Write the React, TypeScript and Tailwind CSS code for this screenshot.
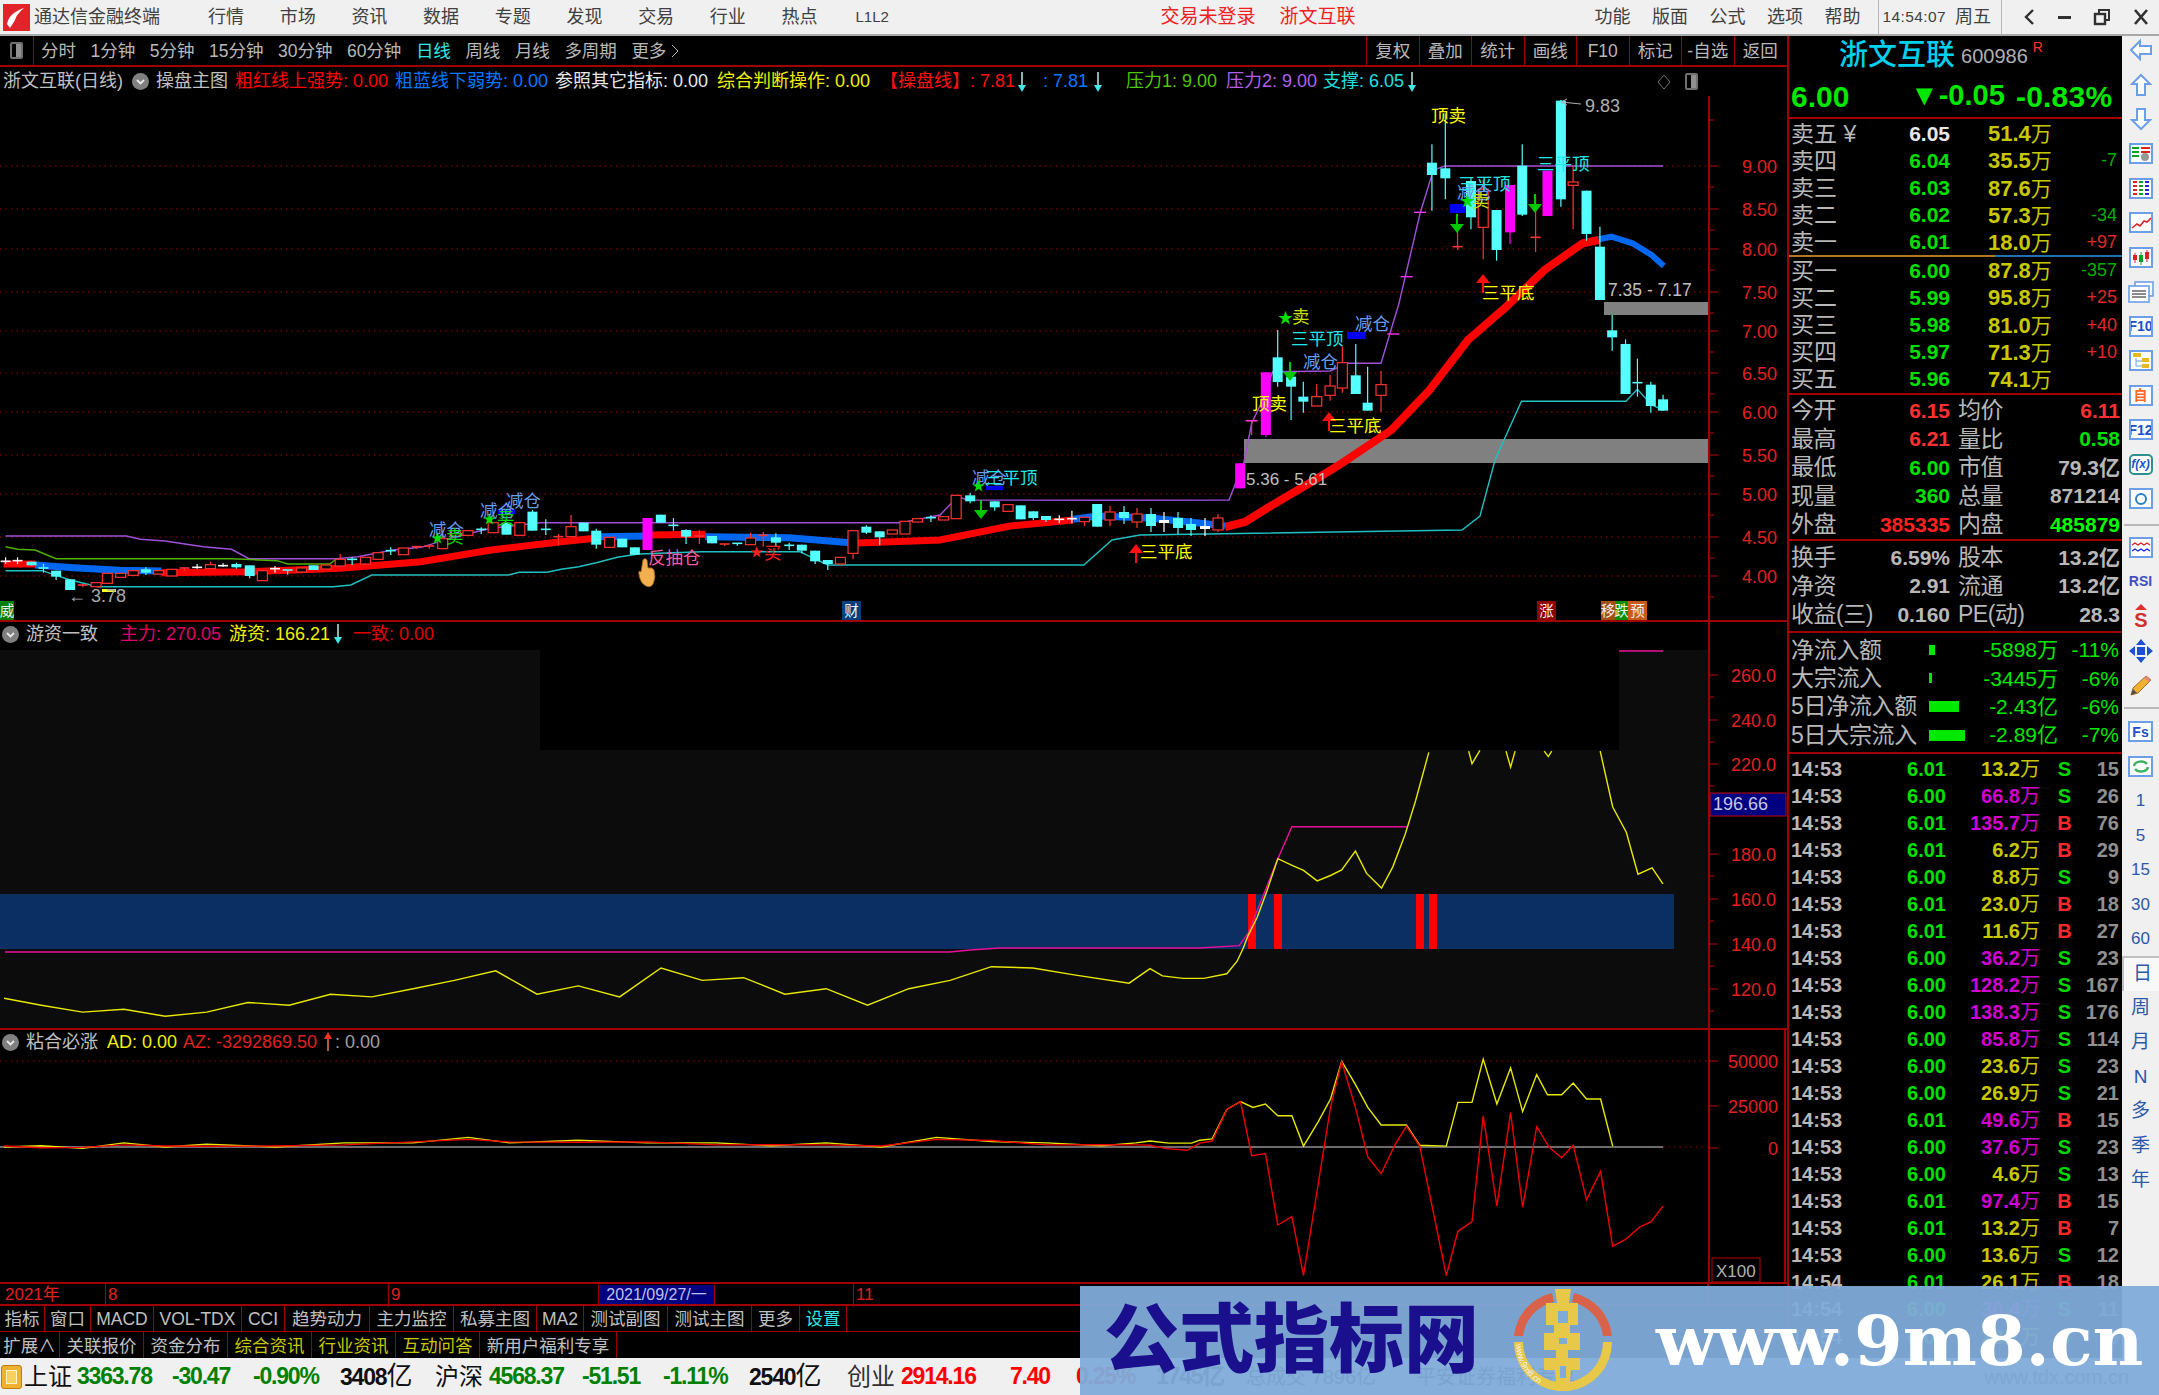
import React from 'react';

type Pt = [number, number];
type Candle = [number, number, number, number, number, string];

// reference crops came at different scales, these map them back to page pixels
const z5 = ([x, y]: Pt): Pt => [1200 + x / 2.613, 80 + y / 3];
const z6 = ([x, y]: Pt): Pt => [x / 1.4255, 440 + y / 3];
const z9 = ([x, y]: Pt): Pt => [1150 + x / 2.41, 620 + y / 2.38];
const ov = ([x, y]: Pt): Pt => [x * 1.377, y * 1.377];
const poly = (pts: Pt[]) => pts.map((p) => `${p[0].toFixed(1)},${p[1].toFixed(1)}`).join(' ');

const leftCandles: Candle[] = [
  [8, 352, 364, 366, 372, 'w'], [25, 352, 362, 364, 372, 'w'], [45, 365, 365, 376, 376, 'c'], [62, 372, 384, 386, 398, 'c'],
  [80, 392, 392, 410, 420, 'c'], [100, 418, 418, 450, 450, 'c'], [118, 432, 435, 442, 442, 'r'], [137, 428, 428, 440, 440, 'r'],
  [153, 400, 400, 430, 430, 'r'], [172, 400, 400, 412, 412, 'r'], [190, 392, 392, 406, 406, 'r'], [208, 382, 388, 398, 405, 'c'],
  [226, 392, 392, 402, 402, 'r'], [245, 388, 388, 408, 408, 'r'], [263, 384, 384, 392, 392, 'r'], [281, 372, 382, 386, 386, 'w'],
  [300, 365, 374, 386, 386, 'r'], [318, 370, 377, 380, 381, 'w'], [337, 368, 372, 382, 386, 'c'], [356, 376, 376, 408, 415, 'c'],
  [374, 392, 392, 422, 422, 'r'], [392, 378, 386, 389, 398, 'w'], [410, 390, 390, 395, 404, 'c'], [430, 384, 384, 396, 396, 'r'],
  [447, 376, 376, 390, 390, 'c'], [465, 375, 375, 387, 387, 'r'], [485, 342, 358, 378, 378, 'r'], [502, 352, 358, 363, 375, 'c'],
  [521, 352, 352, 372, 372, 'r'], [539, 338, 338, 358, 358, 'r'], [557, 322, 332, 338, 345, 'c'], [575, 324, 324, 344, 344, 'r'],
  [594, 320, 320, 326, 326, 'r'], [612, 318, 318, 326, 326, 'r'], [631, 280, 296, 326, 326, 'r'], [649, 272, 272, 288, 288, 'r'],
  [667, 272, 272, 286, 286, 'r'], [686, 262, 268, 276, 282, 'c'], [703, 248, 248, 278, 278, 'r'], [722, 248, 248, 284, 284, 'c'],
  [741, 248, 248, 286, 286, 'r'], [759, 210, 215, 272, 272, 'c'], [778, 238, 268, 272, 285, 'c'], [796, 282, 290, 296, 316, 'r'],
  [814, 225, 260, 290, 290, 'r'], [832, 248, 248, 274, 274, 'c'], [850, 266, 272, 314, 326, 'c'], [869, 292, 292, 322, 322, 'r'],
  [887, 296, 296, 322, 322, 'c'], [905, 322, 322, 344, 344, 'c'], [923, 234, 234, 330, 330, 'm'], [942, 224, 224, 248, 248, 'c'],
  [960, 234, 256, 260, 272, 'c'], [978, 268, 270, 290, 312, 'c'], [997, 270, 288, 294, 312, 'r'], [1015, 288, 288, 310, 310, 'c'],
  [1033, 312, 312, 318, 318, 'r'], [1051, 310, 310, 317, 317, 'c'], [1070, 278, 294, 314, 314, 'r'], [1088, 276, 286, 292, 320, 'r'],
  [1106, 280, 292, 308, 320, 'c'], [1125, 308, 316, 320, 330, 'c'], [1143, 314, 314, 332, 340, 'c'], [1162, 332, 332, 364, 372, 'c'],
  [1180, 360, 360, 372, 390, 'c'], [1198, 352, 352, 372, 372, 'r'], [1216, 272, 272, 340, 358, 'r'], [1235, 256, 260, 278, 282, 'c'],
  [1254, 274, 274, 292, 316, 'c'], [1272, 270, 270, 282, 282, 'r'], [1290, 244, 244, 282, 282, 'r'], [1308, 236, 236, 246, 246, 'r'],
  [1327, 226, 233, 238, 246, 'c'], [1345, 230, 230, 240, 240, 'r'], [1363, 166, 166, 236, 236, 'r'], [1383, 158, 166, 184, 190, 'c'],
  [1418, 184, 184, 202, 212, 'c'], [1437, 194, 194, 214, 214, 'r'], [1455, 196, 196, 238, 238, 'c'], [1473, 214, 214, 234, 240, 'c'],
  [1491, 228, 228, 240, 246, 'c'], [1510, 226, 238, 240, 250, 'w'], [1528, 212, 236, 242, 250, 'w'], [1546, 232, 232, 245, 258, 'r'],
  [1564, 192, 192, 260, 260, 'c'],
];

const midCandles: Candle[] = [
  [1110, 506, 512, 520, 526, 'r'], [1124, 506, 512, 518, 524, 'c'], [1137, 508, 514, 522, 528, 'r'], [1151, 508, 514, 526, 532, 'c'],
  [1164, 512, 520, 523, 532, 'w'], [1178, 512, 518, 528, 534, 'c'], [1191, 518, 524, 530, 536, 'c'], [1205, 518, 526, 529, 536, 'w'],
  [1218, 514, 518, 530, 532, 'r'],
];

const rightCandles: Candle[] = [
  [105, 1150, 1150, 1225, 1225, 'm'], [135, 1020, 1022, 1024, 1065, 'r'], [172, 877, 877, 1065, 1072, 'm'], [203, 750, 832, 906, 920, 'c'],
  [238, 880, 890, 920, 1020, 'c'], [270, 905, 950, 965, 998, 'c'], [305, 912, 950, 978, 978, 'r'], [340, 885, 918, 946, 962, 'r'],
  [372, 800, 848, 924, 938, 'r'], [407, 792, 886, 942, 942, 'c'], [438, 860, 968, 992, 992, 'c'], [473, 872, 914, 946, 996, 'r'],
  [606, 193, 248, 285, 392, 'c'], [641, 100, 265, 295, 358, 'c'], [673, 430, 500, 506, 510, 'r'], [708, 295, 303, 412, 448, 'c'],
  [740, 300, 328, 442, 538, 'r'], [775, 390, 390, 510, 542, 'c'], [810, 315, 315, 457, 492, 'm'], [842, 193, 257, 404, 408, 'c'],
  [877, 345, 472, 478, 516, 'r'], [908, 272, 272, 408, 408, 'm'], [943, 60, 62, 358, 380, 'c'], [975, 258, 306, 316, 448, 'r'],
  [1010, 332, 332, 462, 482, 'c'], [1045, 440, 500, 660, 660, 'c'], [1077, 705, 751, 772, 812, 'c'], [1112, 778, 792, 942, 942, 'c'],
  [1143, 836, 908, 912, 950, 'c'], [1178, 905, 914, 978, 998, 'c'], [1210, 944, 958, 992, 992, 'c'],
];

function CandleMark({ x, hi, top, bot, lo, kind }: { x: number; hi: number; top: number; bot: number; lo: number; kind: string }) {
  const color = kind === 'c' ? '#54ffff' : kind === 'r' ? '#ff3232' : kind === 'm' ? '#ff00ff' : '#ffffff';
  const flat = bot - top < 3;
  return (
    <g>
      <line x1={x} x2={x} y1={hi} y2={lo} stroke={color} strokeWidth={1.2} />
      {flat ? (
        <line x1={x - 5} x2={x + 5} y1={top} y2={top} stroke={color} strokeWidth={1.6} />
      ) : (
        <rect x={x - 5} y={top} width={10} height={bot - top} fill={kind === 'r' ? '#000' : color} stroke={color} strokeWidth={kind === 'r' ? 1.2 : 0} />
      )}
    </g>
  );
}

function DownArrow({ x, y, h = 18, color = '#00c800' }: { x: number; y: number; h?: number; color?: string }) {
  return (
    <g>
      <line x1={x} x2={x} y1={y} y2={y + h - 6} stroke={color} strokeWidth={2} />
      <polygon points={`${x - 7},${y + h - 8} ${x + 7},${y + h - 8} ${x},${y + h + 1}`} fill={color} />
    </g>
  );
}

function UpArrow({ x, y, h = 18, color = '#ff1010' }: { x: number; y: number; h?: number; color?: string }) {
  return (
    <g>
      <polygon points={`${x - 7},${y + 8} ${x + 7},${y + 8} ${x},${y - 1}`} fill={color} />
      <line x1={x} x2={x} y1={y + 6} y2={y + h} stroke={color} strokeWidth={2} />
    </g>
  );
}

const mainLabels: [string, number, number, string][] = [
  ['顶卖', 1431, 122, '#ffff00'], ['三平顶', 1537, 170, '#20e8e8'], ['三平顶', 1458, 190, '#20e8e8'], ['减仓', 1457, 199, '#6a9cf0'],
  ['卖', 1472, 207, '#c8e000'], ['三平底', 1482, 299, '#ffff00'], ['卖', 1292, 323, '#c8e000'], ['三平顶', 1291, 345, '#20e8e8'],
  ['减仓', 1355, 330, '#6a9cf0'], ['减仓', 1303, 368, '#6a9cf0'], ['顶卖', 1252, 410, '#ffff00'], ['三平底', 1329, 432, '#ffff00'],
  ['减仓', 429, 536, '#6a9cf0'], ['卖', 446, 543, '#00d800'], ['减仓', 480, 517, '#6a9cf0'], ['卖', 497, 524, '#00d800'], ['减仓', 506, 507, '#6a9cf0'],
  ['反抽仓', 648, 564, '#ff5aa8'], ['买', 764, 559, '#ff2020'], ['减仓', 972, 484, '#6a9cf0'], ['三平顶', 985, 484, '#20e8e8'], ['三平底', 1140, 558, '#ffff00'],
];

const priceAxis: [string, number][] = [
  ['9.00', 166], ['8.50', 209], ['8.00', 249], ['7.50', 292], ['7.00', 331], ['6.50', 373], ['6.00', 412], ['5.50', 455], ['5.00', 494], ['4.50', 537], ['4.00', 576],
];

function MainChart() {
  const purple: Pt[] = [
    ...[[8, 288], [180, 288], [200, 298], [235, 303], [290, 320], [330, 328], [355, 356], [480, 356], [510, 350], [560, 330], [600, 322], [650, 290], [700, 265], [770, 248], [1285, 248], [1340, 225], [1365, 170], [1380, 180], [1568, 181]].map((p) => z6(p as Pt)),
    [1229, 500],
    ...[[115, 1145], [135, 1030], [160, 970], [190, 875], [340, 873], [385, 850], [473, 850], [520, 670], [575, 400], [610, 270], [640, 258], [1210, 258]].map((p) => z5(p as Pt)),
  ];
  const green = [[8, 320], [25, 328], [50, 330], [80, 356], [330, 356], [395, 362], [410, 372], [470, 372], [480, 356]].map((p) => z6(p as Pt));
  const teal: Pt[] = [
    ...[[8, 392], [60, 392], [100, 420], [140, 440], [475, 440], [500, 435], [530, 405], [725, 405], [740, 397], [780, 397], [800, 388], [825, 380], [850, 368], [880, 352], [910, 342], [1000, 335], [1140, 335], [1180, 375], [1545, 375]].map((p) => z6(p as Pt)),
    [1112, 540], [1140, 535], [1462, 530], [1480, 516], [1495, 460],
    ...[[840, 964], [1113, 964], [1143, 928], [1180, 975], [1210, 990]].map((p) => z5(p as Pt)),
  ];
  const redA = [[5, 372], [50, 372]].map((p) => z6(p as Pt));
  const blueA = [[50, 375], [110, 384], [170, 391], [230, 393]].map((p) => z6(p as Pt));
  const redB = [[230, 398], [350, 395], [485, 385], [600, 365], [700, 330], [800, 305], [855, 293]].map((p) => z6(p as Pt));
  const blueB = [[855, 290], [925, 288]].map((p) => z6(p as Pt));
  const redC = [[925, 285], [1005, 283]].map((p) => z6(p as Pt));
  const blueC = [[1005, 290], [1125, 293], [1212, 308]].map((p) => z6(p as Pt));
  const redD = [[1212, 310], [1340, 300], [1440, 258], [1530, 240]].map((p) => z6(p as Pt));
  const blueD: Pt[] = [z6([1530, 238]), [1097, 516], [1150, 518], [1190, 522], [1225, 526]];
  const redE: Pt[] = [
    [1225, 527], [1245, 522], [1269, 507],
    ...[[300, 1200], [370, 1150], [500, 1050], [600, 930], [700, 780], [800, 680], [900, 570], [1000, 490], [1042, 480]].map((p) => z5(p as Pt)),
  ];
  const blueE = [[1042, 478], [1075, 470], [1130, 490], [1180, 525], [1212, 558]].map((p) => z5(p as Pt));

  return (
    <svg viewBox="0 67 1787 553" className="absolute inset-0 w-full h-full text-[17.5px]">
      {priceAxis.map(([label, y]) => (
        <g key={label}>
          <line x1={0} x2={1709} y1={y} y2={y} stroke="#a00000" strokeWidth={1} strokeDasharray="1.5 4" />
          <line x1={1709} x2={1718} y1={y} y2={y} stroke="#c00000" />
          <line x1={1709} x2={1714} y1={y + 21} y2={y + 21} stroke="#c00000" />
          <text x={1777} y={y + 7} textAnchor="end" fill="#e02020" fontSize={18}>{label}</text>
        </g>
      ))}
      <rect x={1244} y={439} width={465} height={24} fill="#808080" />
      <rect x={1604} y={302} width={105} height={13} fill="#808080" />
      <polyline points={poly(purple)} fill="none" stroke="#a050d8" strokeWidth={1.4} />
      <polyline points={poly(green)} fill="none" stroke="#50b000" strokeWidth={1.4} />
      <polyline points={poly(teal)} fill="none" stroke="#20c0c0" strokeWidth={1.4} />
      {[redA, redB, redC, redD, redE].map((line, i) => (
        <polyline key={i} points={poly(line)} fill="none" stroke="#ff0000" strokeWidth={i === 4 ? 8 : 7} />
      ))}
      {[blueA, blueB, blueC, blueD, blueE].map((line, i) => (
        <polyline key={i} points={poly(line)} fill="none" stroke="#0068f0" strokeWidth={i === 4 ? 6 : 7} />
      ))}
      {leftCandles.map((c) => {
        const [x] = z6([c[0], 0]);
        return <CandleMark key={`l${c[0]}`} x={x} hi={440 + c[1] / 3} top={440 + c[2] / 3} bot={440 + c[3] / 3} lo={440 + c[4] / 3} kind={c[5]} />;
      })}
      {midCandles.map((c) => <CandleMark key={`m${c[0]}`} x={c[0]} hi={c[1]} top={c[2]} bot={c[3]} lo={c[4]} kind={c[5]} />)}
      {rightCandles.map((c) => {
        const [x] = z5([c[0], 0]);
        return <CandleMark key={`r${c[0]}`} x={x} hi={80 + c[1] / 3} top={80 + c[2] / 3} bot={80 + c[3] / 3} lo={80 + c[4] / 3} kind={c[5]} />;
      })}
      {[[135, 1022], [505, 762], [540, 590], [575, 397]].map(([x, y]) => {
        const [px, py] = z5([x, y]);
        return <line key={x} x1={px - 6} x2={px + 6} y1={py} y2={py} stroke="#ff30ff" strokeWidth={1.4} />;
      })}
      <rect x={1450} y={204} width={16} height={9} fill="#0000f0" />
      <rect x={1347} y={332} width={18} height={7} fill="#0000f0" />
      <rect x={498} y={509} width={17} height={5} fill="#0000f0" />
      <rect x={986} y={486} width={17} height={4} fill="#0000f0" />
      <rect x={102} y={589} width={14} height={3} fill="#ffff20" />
      <DownArrow x={1457} y={214} />
      <DownArrow x={1535} y={194} />
      <DownArrow x={1290} y={362} />
      <DownArrow x={981} y={500} />
      <UpArrow x={1483} y={275} />
      <UpArrow x={1329} y={413} />
      <UpArrow x={1136} y={545} />
      {mainLabels.map(([t, x, y, color], i) => (
        <text key={i} x={x} y={y} fill={color} fontSize={17.5}>{t}</text>
      ))}
      <text x={1460} y={206} fill="#00e000" fontSize={15}>★</text>
      <text x={1278} y={323} fill="#00e000" fontSize={15}>★</text>
      <text x={431} y={542} fill="#00e000" fontSize={13}>★</text>
      <text x={483} y={523} fill="#00e000" fontSize={13}>★</text>
      <text x={972} y={490} fill="#00e000" fontSize={13}>★</text>
      <text x={750} y={556} fill="#ff2020" fontSize={13}>★</text>
      <text x={1585} y={112} fill="#b0b0b0" fontSize={18}>9.83</text>
      <path d="M1561 102 L1567 99 M1561 102 L1567 105 M1561 102 L1581 104" stroke="#b0b0b0" fill="none" />
      <text x={1608} y={296} fill="#c0c0c0" fontSize={17.5}>7.35 - 7.17</text>
      <text x={1246} y={485} fill="#c0c0c0" fontSize={17}>5.36 - 5.61</text>
      <text x={68} y={602} fill="#a8a8a8" fontSize={18}>← 3.78</text>
      {/* hand cursor */}
      <path d="M643 560 q2 -3 4 0 l1 8 q4 -1 6 2 q2 8 -1 14 q-2 4 -7 2 q-6 -3 -7 -12 q-1 -4 2 -2 z" fill="#f2b050" stroke="#a86a20" strokeWidth={0.8} />
      <line x1={1709} x2={1709} y1={96} y2={622} stroke="#a00000" strokeWidth={2} />
      <line x1={1709} x2={1714} y1={120} y2={120} stroke="#c00000" />
    </svg>
  );
}

function Tag({ x, w, bg, t }: { x: number; w: number; bg: string; t: string }) {
  return (
    <g>
      <rect x={x} y={601} width={w} height={19} fill={bg} />
      <text x={x + w / 2} y={616} textAnchor="middle" fill="#f0f0f0" fontSize={14.5}>{t}</text>
    </g>
  );
}

const sub1Axis: [string, number][] = [['260.0', 675], ['240.0', 720], ['220.0', 764], ['180.0', 854], ['160.0', 899], ['140.0', 944], ['120.0', 989]];

function FundChart() {
  const yellowLeft = [[3, 725], [30, 730], [60, 735], [90, 733], [120, 738], [150, 735], [180, 728], [210, 730], [240, 722], [270, 724], [300, 718], [330, 712], [360, 705], [390, 722], [420, 716], [450, 724], [480, 703], [510, 712], [540, 710], [570, 722], [600, 718], [630, 730], [660, 718], [690, 712], [720, 702], [750, 703], [780, 708], [820, 714]].map((p) => ov(p as Pt));
  const yellowA = [[0, 830], [30, 847], [80, 853], [130, 853], [185, 842], [210, 812], [225, 780], [237, 750], [258, 708], [280, 650], [308, 568], [345, 585], [370, 596], [403, 621], [435, 608], [462, 595], [495, 550], [522, 603], [558, 638], [585, 588], [615, 510], [640, 430], [672, 315]].map((p) => z9(p as Pt));
  const yellowB = [[768, 312], [776, 342], [795, 310]].map((p) => z9(p as Pt));
  const yellowC = [[858, 312], [869, 350], [880, 312]].map((p) => z9(p as Pt));
  const yellowD = [[950, 312], [960, 325], [968, 312]].map((p) => z9(p as Pt));
  const yellowE = [[1085, 312], [1115, 445], [1148, 505], [1176, 605], [1210, 590], [1236, 628]].map((p) => z9(p as Pt));
  const magenta: Pt[] = [
    [5, 952], [950, 952], [970, 950], [1000, 948], [1150, 948], [1200, 948],
    ...[[215, 775], [237, 745], [308, 568], [342, 492], [620, 492]].map((p) => z9(p as Pt)),
  ];
  return (
    <svg viewBox="0 622 1787 406" className="absolute inset-0 w-full h-full">
      <rect x={0} y={650} width={1709} height={380} fill="#0c0c0c" />
      <rect x={540} y={650} width={1079} height={100} fill="#000" />
      <rect x={0} y={894} width={1674} height={55} fill="#0b2f63" />
      {[[1248, 8], [1274, 8], [1416, 8], [1429, 8]].map(([x, w]) => (
        <rect key={x} x={x} y={894} width={w} height={55} fill="#ff0000" />
      ))}
      <polyline points={poly(magenta)} fill="none" stroke="#e8109a" strokeWidth={1.4} />
      <line x1={1619} x2={1663} y1={651} y2={651} stroke="#e8109a" strokeWidth={1.4} />
      <polyline points={poly([...yellowLeft, ...yellowA])} fill="none" stroke="#e8e800" strokeWidth={1.4} />
      {[yellowB, yellowC, yellowD, yellowE].map((line, i) => (
        <polyline key={i} points={poly(line)} fill="none" stroke="#e8e800" strokeWidth={1.4} />
      ))}
      <line x1={1709} x2={1709} y1={622} y2={1030} stroke="#a00000" strokeWidth={2} />
      {sub1Axis.map(([label, y]) => (
        <g key={label}>
          <line x1={1709} x2={1718} y1={y} y2={y} stroke="#c00000" />
          <line x1={1709} x2={1714} y1={y + 22} y2={y + 22} stroke="#c00000" />
          <text x={1776} y={y + 7} textAnchor="end" fill="#e02020" fontSize={18}>{label}</text>
        </g>
      ))}
      <rect x={1710} y={793} width={76} height={23} fill="#000080" stroke="#c00000" />
      <text x={1713} y={810} fill="#c8c8e8" fontSize={18}>196.66</text>
    </svg>
  );
}

function StickChart() {
  const flat = [[3, 833], [30, 832], [60, 834], [90, 830], [120, 833], [150, 831], [200, 833], [250, 830], [300, 830], [340, 826], [370, 830], [420, 828], [470, 830], [520, 830], [560, 832], [600, 830], [640, 833], [680, 826], [720, 829], [760, 830], [800, 832], [825, 830]].map((p) => ov(p as Pt));
  const yellow = [[0, 1240], [45, 1245], [100, 1245], [120, 1238], [150, 1235], [185, 1165], [218, 1146], [248, 1160], [278, 1152], [308, 1180], [342, 1180], [370, 1252], [405, 1195], [435, 1140], [462, 1050], [495, 1105], [525, 1160], [557, 1202], [618, 1202], [650, 1250], [714, 1252], [742, 1148], [776, 1148], [803, 1045], [836, 1152], [869, 1066], [898, 1170], [932, 1082], [958, 1130], [992, 1130], [1020, 1102], [1052, 1140], [1086, 1140], [1115, 1252]].map((p) => z9(p as Pt));
  const red = [[0, 1250], [40, 1258], [90, 1262], [120, 1245], [150, 1240], [185, 1165], [218, 1146], [245, 1275], [278, 1270], [308, 1440], [342, 1420], [370, 1560], [405, 1345], [435, 1160], [462, 1052], [495, 1160], [525, 1278], [557, 1318], [590, 1250], [618, 1205], [650, 1252], [714, 1560], [742, 1455], [776, 1432], [803, 1180], [836, 1395], [869, 1172], [898, 1398], [932, 1206], [962, 1255], [992, 1280], [1020, 1250], [1052, 1380], [1086, 1312], [1115, 1490], [1145, 1475], [1180, 1445], [1208, 1432], [1236, 1395]].map((p) => z9(p as Pt));
  const flatRed = flat.map((p, i): Pt => [p[0], p[1] + (i % 2 ? 2 : -1)]);
  return (
    <svg viewBox="0 1030 1787 252" className="absolute inset-0 w-full h-full">
      <line x1={0} x2={1709} y1={1061} y2={1061} stroke="#a00000" strokeDasharray="1.5 4" />
      <line x1={1663} x2={1709} y1={1147} y2={1147} stroke="#a00000" strokeDasharray="1.5 4" />
      <line x1={0} x2={1663} y1={1147} y2={1147} stroke="#909090" strokeWidth={1.4} />
      <polyline points={poly([...flat, ...yellow])} fill="none" stroke="#e8e800" strokeWidth={1.4} />
      <polyline points={poly([...flatRed, ...red])} fill="none" stroke="#f00000" strokeWidth={1.4} />
      <line x1={1709} x2={1709} y1={1030} y2={1282} stroke="#a00000" strokeWidth={2} />
      <line x1={1785} x2={1785} y1={1030} y2={1282} stroke="#a00000" strokeWidth={2} />
      {[['50000', 1061], ['25000', 1106], ['0', 1148]].map(([label, y]) => (
        <g key={label}>
          <line x1={1709} x2={1718} y1={y} y2={y} stroke="#c00000" />
          <text x={1778} y={Number(y) + 7} textAnchor="end" fill="#e02020" fontSize={18}>{label}</text>
        </g>
      ))}
      <rect x={1712} y={1258} width={48} height={24} fill="#000" stroke="#c00000" />
      <text x={1716} y={1277} fill="#b0b0b0" fontSize={17}>X100</text>
    </svg>
  );
}

function Dropdown() {
  return (
    <span className="inline-flex items-center justify-center w-[17px] h-[17px] rounded-full bg-[#808080]">
      <svg width="11" height="11" viewBox="0 0 11 11"><path d="M2 4l3.5 3.5L9 4" stroke="#e8e8e8" strokeWidth="1.8" fill="none" /></svg>
    </span>
  );
}

function CyanArrow() {
  return (
    <svg width="10" height="24" viewBox="0 0 10 24" className="shrink-0">
      <line x1="5" x2="5" y1="2" y2="18" stroke="#c8ffff" strokeWidth="1.4" />
      <polygon points="1,15 9,15 5,22" fill="#40e8e8" />
    </svg>
  );
}

function RedUpArrow() {
  return (
    <svg width="10" height="24" viewBox="0 0 10 24" className="shrink-0">
      <line x1="5" x2="5" y1="6" y2="21" stroke="#ff8060" strokeWidth="1.4" />
      <polygon points="1,9 9,9 5,2" fill="#ff3020" />
    </svg>
  );
}

function TitleBar() {
  const menus = ['行情', '市场', '资讯', '数据', '专题', '发现', '交易', '行业', '热点'];
  return (
    <div className="h-[36px] shrink-0 bg-[#f0f0f0] border-b-2 border-[#a8a8a8] flex items-center text-[#404040] text-[18px] whitespace-nowrap">
      <svg width="27" height="27" viewBox="0 0 27 27" className="ml-[3px] shrink-0">
        <rect width="27" height="27" fill="#e0242a" />
        <path d="M4 20 Q6 9 21 4 Q13 11 12 16 Q11 18 7 24 Z" fill="#fff" />
      </svg>
      <span className="ml-[4px] w-[174px] shrink-0">通达信金融终端</span>
      <div className="flex gap-[35.7px] shrink-0">
        {menus.map((m) => <span key={m}>{m}</span>)}
      </div>
      <span className="ml-[38px] text-[15px] w-[305px] shrink-0">L1L2</span>
      <span className="text-[#f02020] text-[19px] w-[119px] shrink-0">交易未登录</span>
      <span className="text-[#f02020] text-[19px] w-[315px] shrink-0">浙文互联</span>
      <div className="flex gap-[21.5px] shrink-0">
        {['功能', '版面', '公式', '选项', '帮助'].map((m) => <span key={m}>{m}</span>)}
      </div>
      <div className="ml-[17px] h-full border-x border-[#b8b8b8] flex items-center gap-[9px] px-[4px] w-[124px] shrink-0">
        <span className="text-[15.5px] tracking-[0.4px]">14:54:07</span>
        <span>周五</span>
      </div>
      <svg width="157" height="24" viewBox="0 0 157 24" className="shrink-0" stroke="#303030" fill="none">
        <path d="M31 5l-7 7 7 7" strokeWidth="2.4" />
        <path d="M56 12.5h13" strokeWidth="3" />
        <rect x="93" y="9" width="10" height="10" strokeWidth="2.4" />
        <path d="M97 9V5h10v10h-4" strokeWidth="2" />
        <path d="M133 5l12 14M145 5l-12 14" strokeWidth="2.6" />
      </svg>
    </div>
  );
}

function PeriodBar() {
  const periods = ['分时', '1分钟', '5分钟', '15分钟', '30分钟', '60分钟', '日线', '周线', '月线', '多周期'];
  const tools = ['复权', '叠加', '统计', '画线', 'F10', '标记', '-自选', '返回'];
  return (
    <div className="h-[31px] shrink-0 flex items-stretch border-b-2 border-[#a00000] text-[#b8b8b8] text-[17.5px]">
      <div className="w-[34px] shrink-0 border-r border-[#a00000] flex items-center justify-center">
        <span className="w-[13px] h-[17px] rounded-[2px] border-2 border-[#707070] flex justify-end"><span className="w-[5px] bg-[#909090]" /></span>
      </div>
      <div className="flex items-center gap-[14.5px] pl-[7px] pt-[1px]">
        {periods.map((p) => (
          <span key={p} className={p === '日线' ? 'text-[#30e8e8]' : ''}>{p}</span>
        ))}
        <span className="flex items-center gap-[5px]">
          更多
          <svg width="8" height="16" viewBox="0 0 8 16"><path d="M1 2l6 6-6 6" stroke="#b8b8b8" fill="none" /></svg>
        </span>
      </div>
      <div className="ml-auto flex pr-[1px]">
        {tools.map((t) => (
          <span key={t} className="w-[52.5px] border-l border-[#a00000] flex items-center justify-center pt-[1px]">{t}</span>
        ))}
      </div>
    </div>
  );
}

function Legend() {
  return (
    <div className="relative h-[29px] flex items-center text-[18px] whitespace-nowrap pl-[3px]">
      <span className="text-[#c0c0c0] w-[129px]">浙文互联(日线)</span>
      <Dropdown />
      <span className="text-[#c0c0c0] ml-[7px] w-[79px]">操盘主图</span>
      <span className="text-[#ff0000] w-[160px]">粗红线上强势: 0.00</span>
      <span className="text-[#0078ff] w-[160px]">粗蓝线下弱势: 0.00</span>
      <span className="text-[#e8e8e8] w-[162px]">参照其它指标: 0.00</span>
      <span className="text-[#f0f000] w-[163px]">综合判断操作: 0.00</span>
      <span className="text-[#ff1010] w-[137px]">【操盘线】: 7.81</span>
      <CyanArrow />
      <span className="text-[#0078ff] ml-[16px] w-[50px]">: 7.81</span>
      <CyanArrow />
      <span className="text-[#50c800] ml-[23px] w-[100px]">压力1: 9.00</span>
      <span className="text-[#b060f0] w-[97px]">压力2: 9.00</span>
      <span className="text-[#20e0e0] w-[84px]">支撑: 6.05</span>
      <CyanArrow />
      <svg width="14" height="18" viewBox="0 0 14 18" className="ml-[240px]"><path d="M7 2l6 7-6 7-6-7z" stroke="#707070" fill="none" /></svg>
      <span className="ml-[14px] w-[13px] h-[17px] rounded-[2px] border-2 border-[#707070] flex justify-end"><span className="w-[5px] bg-[#909090]" /></span>
    </div>
  );
}

function Pane({ h, children }: { h: string; children: React.ReactNode }) {
  return <div className={`relative shrink-0 ${h}`}>{children}</div>;
}

function DateAxis() {
  return (
    <div className="relative h-[24px] shrink-0 border-y-2 border-[#a00000] flex items-center text-[#e02020] text-[17px] whitespace-nowrap pt-[1px]">
      <span className="pl-[5px] w-[106px] border-r border-[#a00000]">2021年</span>
      <span className="pl-[2px] w-[283px] border-r border-[#a00000]">8</span>
      <span className="pl-[2px] w-[209px]">9</span>
      <span className="w-[117px] self-stretch bg-[#000080] text-[#c0c0f0] text-[16px] flex items-center justify-center border-x border-[#a00000]">2021/09/27/一</span>
      <span className="ml-[138px] pl-[2px] border-l border-[#a00000]">11</span>
      <div className="absolute right-[78px] top-0 bottom-0 border-r-2 border-[#a00000]" />
    </div>
  );
}

function Tab({ t, w, color = 'text-[#c0c0c0]' }: { t: string; w: string; color?: string }) {
  return <span className={`${w} ${color} shrink-0 border-r border-[#a00000] flex items-center justify-center pt-[2px]`}>{t}</span>;
}

function TabBars() {
  return (
    <>
      <div className="h-[26px] shrink-0 flex border-b border-[#a00000] text-[17.5px] whitespace-nowrap">
        <Tab t="指标" w="w-[45px]" />
        <Tab t="窗口" w="w-[46px]" />
        <Tab t="MACD" w="w-[63px]" />
        <Tab t="VOL-TDX" w="w-[88px]" />
        <Tab t="CCI" w="w-[43px]" />
        <Tab t="趋势动力" w="w-[85px]" />
        <Tab t="主力监控" w="w-[84px]" />
        <Tab t="私募主图" w="w-[83px]" />
        <Tab t="MA2" w="w-[47px]" />
        <Tab t="测试副图" w="w-[84px]" />
        <Tab t="测试主图" w="w-[84px]" />
        <Tab t="更多" w="w-[48px]" />
        <Tab t="设置" w="w-[47px]" color="text-[#30e8e8]" />
      </div>
      <div className="h-[26px] shrink-0 flex text-[17.5px] whitespace-nowrap">
        <Tab t="扩展∧" w="w-[60px]" />
        <Tab t="关联报价" w="w-[84px]" />
        <Tab t="资金分布" w="w-[84px]" />
        <Tab t="综合资讯" w="w-[84px]" color="text-[#c8c800]" />
        <Tab t="行业资讯" w="w-[84px]" color="text-[#c8c800]" />
        <Tab t="互动问答" w="w-[84px]" color="text-[#c8c800]" />
        <Tab t="新用户福利专享" w="w-[137px]" />
      </div>
    </>
  );
}

const asks = [
  ['卖五 ¥', '6.05', '51.4', '', 'text-[#e8e8e8]'], ['卖四', '6.04', '35.5', '-7', ''], ['卖三', '6.03', '87.6', '', ''],
  ['卖二', '6.02', '57.3', '-34', ''], ['卖一', '6.01', '18.0', '+97', ''],
];
const bids = [
  ['买一', '6.00', '87.8', '-357', ''], ['买二', '5.99', '95.8', '+25', ''], ['买三', '5.98', '81.0', '+40', ''],
  ['买四', '5.97', '71.3', '+10', ''], ['买五', '5.96', '74.1', '', ''],
];

function BookRow({ r }: { r: string[] }) {
  return (
    <div className="h-[27.1px] flex items-center">
      <span className="w-[119px] pl-[2px] text-[23px] text-[#b8b8b8] whitespace-nowrap">{r[0]}</span>
      <span className={`w-[42px] text-right text-[21px] font-bold ${r[4] || 'text-[#00e000]'}`}>{r[1]}</span>
      <span className="w-[38px]" />
      <span className="w-[80px] text-[#c8c800] text-[22px] font-bold whitespace-nowrap">{r[2]}<span className="font-normal text-[21px]">万</span></span>
      <span className={`w-[49px] text-right text-[18px] ${r[3].startsWith('+') ? 'text-[#e02828]' : 'text-[#00b000]'}`}>{r[3]}</span>
    </div>
  );
}

const stats = [
  ['今开', '6.15', 'text-[#ff3030]', '均价', '6.11', 'text-[#ff3030]'],
  ['最高', '6.21', 'text-[#ff3030]', '量比', '0.58', 'text-[#00e000]'],
  ['最低', '6.00', 'text-[#00e000]', '市值', '79.3亿', 'text-[#b8b8b8]'],
  ['现量', '360', 'text-[#00e000]', '总量', '871214', 'text-[#b8b8b8]'],
  ['外盘', '385335', 'text-[#ff2020]', '内盘', '485879', 'text-[#00ff00]'],
];
const stats2 = [
  ['换手', '6.59%', 'text-[#b8b8b8]', '股本', '13.2亿', 'text-[#b8b8b8]'],
  ['净资', '2.91', 'text-[#b8b8b8]', '流通', '13.2亿', 'text-[#b8b8b8]'],
  ['收益(三)', '0.160', 'text-[#b8b8b8]', 'PE(动)', '28.3', 'text-[#b8b8b8]'],
];

function StatRow({ r, h }: { r: string[]; h: string }) {
  return (
    <div className={`${h} flex items-center text-[#b8b8b8] whitespace-nowrap`}>
      <span className="w-[84px] pl-[2px] text-[23px] shrink-0 tracking-[-0.5px]">{r[0]}</span>
      <span className={`w-[77px] text-right text-[21px] font-bold shrink-0 ${r[2]}`}>{r[1]}</span>
      <span className="w-[70px] pl-[8px] text-[23px] shrink-0 tracking-[-0.5px]">{r[3]}</span>
      <span className={`w-[100px] text-right text-[21px] font-bold shrink-0 ${r[5]}`}>{r[4]}</span>
    </div>
  );
}

const flows = [
  ['净流入额', 'w-[6px] h-[10px]', '-5898万', '-11%'],
  ['大宗流入', 'w-[3px] h-[10px]', '-3445万', '-6%'],
  ['5日净流入额', 'w-[30px] h-[11px]', '-2.43亿', '-6%'],
  ['5日大宗流入', 'w-[36px] h-[11px]', '-2.89亿', '-7%'],
];

const trades: [string, string, string, string, string][] = [
  ['14:53', '6.01', '13.2', 'S', '15'], ['14:53', '6.00', '66.8', 'S', '26'], ['14:53', '6.01', '135.7', 'B', '76'], ['14:53', '6.01', '6.2', 'B', '29'],
  ['14:53', '6.00', '8.8', 'S', '9'], ['14:53', '6.01', '23.0', 'B', '18'], ['14:53', '6.01', '11.6', 'B', '27'], ['14:53', '6.00', '36.2', 'S', '23'],
  ['14:53', '6.00', '128.2', 'S', '167'], ['14:53', '6.00', '138.3', 'S', '176'], ['14:53', '6.00', '85.8', 'S', '114'], ['14:53', '6.00', '23.6', 'S', '23'],
  ['14:53', '6.00', '26.9', 'S', '21'], ['14:53', '6.01', '49.6', 'B', '15'], ['14:53', '6.00', '37.6', 'S', '23'], ['14:53', '6.00', '4.6', 'S', '13'],
  ['14:53', '6.01', '97.4', 'B', '15'], ['14:53', '6.01', '13.2', 'B', '7'], ['14:53', '6.00', '13.6', 'S', '12'], ['14:54', '6.01', '26.1', 'B', '18'],
  ['14:54', '6.00', '30.4', 'S', '11'], ['14:54', '6.00', '22.7', 'S', '9'],
];

function QuotePanel() {
  return (
    <div className="w-[335px] shrink-0 border-l-2 border-[#a00000] flex flex-col overflow-hidden">
      <div className="h-[39px] shrink-0 flex items-center pl-[50px] whitespace-nowrap">
        <span className="text-[#00d0ee] text-[29px] leading-none font-medium">浙文互联</span>
        <span className="text-[#b0b0b0] text-[20px] ml-[6px]">600986</span>
        <span className="text-[#ff3030] text-[14px] ml-[5px] -mt-[16px]">R</span>
      </div>
      <div className="h-[44px] shrink-0 border-b-2 border-[#a00000] flex items-center font-bold text-[#00e800] text-[30px] whitespace-nowrap">
        <span className="pl-[2px] w-[121px]">6.00</span>
        <span className="w-[106px] text-[29px]">▼-0.05</span>
        <span className="text-[30px] tracking-[0.2px]">-0.83%</span>
      </div>
      <div className="h-[136px] shrink-0 flex flex-col justify-center pt-[2px]">
        {asks.map((r) => <BookRow key={r[0]} r={r} />)}
      </div>
      <div className="h-[2px] shrink-0 flex">
        <div className="w-[206px] bg-[#b07820]" />
        <div className="flex-1 bg-[#2070b0]" />
      </div>
      <div className="h-[138px] shrink-0 border-b-2 border-[#a00000] flex flex-col justify-center">
        {bids.map((r) => <BookRow key={r[0]} r={r} />)}
      </div>
      <div className="h-[146px] shrink-0 border-b-2 border-[#a00000] flex flex-col justify-center pt-[1px]">
        {stats.map((r) => <StatRow key={r[0]} r={r} h="h-[28.4px]" />)}
      </div>
      <div className="h-[92px] shrink-0 border-b-2 border-[#a00000] flex flex-col justify-center">
        {stats2.map((r) => <StatRow key={r[0]} r={r} h="h-[28.4px]" />)}
      </div>
      <div className="h-[121px] shrink-0 border-b-2 border-[#a00000] flex flex-col justify-center text-[#00e800]">
        {flows.map((f) => (
          <div key={f[0]} className="h-[28.4px] flex items-center whitespace-nowrap">
            <span className="w-[140px] pl-[2px] text-[#b8b8b8] text-[23px] shrink-0 tracking-[-0.3px]">{f[0]}</span>
            <span className="w-[49px] shrink-0"><span className={`block bg-[#00e800] ${f[1]}`} /></span>
            <span className="w-[80px] text-right text-[21px] shrink-0">{f[2]}</span>
            <span className="w-[61px] text-right text-[21px] font-medium shrink-0">{f[3]}</span>
          </div>
        ))}
      </div>
      <div className="flex-1 flex flex-col pt-[1px] overflow-hidden">
        {trades.map((t, i) => {
          const big = Number(t[2]) > 30;
          return (
            <div key={i} className="h-[27.05px] shrink-0 flex items-center whitespace-nowrap">
              <span className="w-[102px] pl-[2px] text-[20px] font-bold text-[#b8b8b8]">{t[0]}</span>
              <span className="w-[55px] text-right text-[20px] font-bold text-[#00e000]">{t[1]}</span>
              <span className={`w-[94px] text-right text-[20px] font-bold ${big ? 'text-[#d000d0]' : 'text-[#c8c800]'}`}>{t[2]}<span className="font-normal">万</span></span>
              <span className={`w-[45px] pl-[4px] text-center text-[20px] font-bold ${t[3] === 'S' ? 'text-[#00d800]' : 'text-[#ff2828]'}`}>{t[3]}</span>
              <span className="w-[34px] text-right text-[20px] font-bold text-[#909090]">{t[4]}</span>
            </div>
          );
        })}
      </div>
    </div>
  );
}

function Frame({ children, wide = false }: { children: React.ReactNode; wide?: boolean }) {
  return (
    <span className={`${wide ? 'w-[25px]' : 'w-[24px]'} h-[21px] bg-white border-2 border-[#6c9fe8] flex items-center justify-center overflow-hidden text-[#1c50c8] text-[14px] font-bold leading-none`}>
      {children}
    </span>
  );
}

function Arrow({ d }: { d: string }) {
  return (
    <svg width="26" height="26" viewBox="0 0 26 26"><path d={d} fill="#fff" stroke="#6c9fe8" strokeWidth="2" /></svg>
  );
}

function SideBar() {
  const cell = 'h-[34.5px] shrink-0 flex items-center justify-center';
  return (
    <div className="w-[37px] shrink-0 bg-[#f0f0f0] overflow-hidden">
      <div className="flex flex-col -mt-[3px] text-[#2c58a8]">
        <div className={cell}><Arrow d="M3 13l9-9v5h11v8H12v5z" /></div>
        <div className={cell}><Arrow d="M13 3l9 9h-5v11H9V12H4z" /></div>
        <div className={cell}><Arrow d="M13 23l9-9h-5V3H9v11H4z" /></div>
        <div className={cell}>
          <Frame>
            <svg width="20" height="17" viewBox="0 0 20 17">
              <path d="M1 3h7M1 7h7M1 11h7" stroke="#10a020" strokeWidth="2" />
              <path d="M10 3h9M10 7h9" stroke="#e02020" strokeWidth="2" />
              <circle cx="14" cy="12" r="4" fill="#999" />
            </svg>
          </Frame>
        </div>
        <div className={cell}>
          <Frame>
            <svg width="20" height="17" viewBox="0 0 20 17">
              <path d="M2 2h4M2 6h4M2 10h4M2 14h4" stroke="#e02020" strokeWidth="2" />
              <path d="M8 2h4M8 6h4M8 10h4M8 14h4" stroke="#10a020" strokeWidth="2" />
              <path d="M14 2h4M14 6h4M14 10h4M14 14h4" stroke="#2020e0" strokeWidth="2" />
            </svg>
          </Frame>
        </div>
        <div className={cell}>
          <Frame>
            <svg width="20" height="17" viewBox="0 0 20 17"><path d="M1 14l5-4 3 2 4-5 3 1 4-4" stroke="#e02020" strokeWidth="1.6" fill="none" /></svg>
          </Frame>
        </div>
        <div className={cell}>
          <Frame>
            <svg width="20" height="17" viewBox="0 0 20 17">
              <path d="M4 4v10M16 1v12" stroke="#e02020" />
              <path d="M10 3v13" stroke="#10a020" />
              <rect x="2" y="6" width="4" height="5" fill="#e02020" />
              <rect x="8" y="6" width="4" height="7" fill="#10a020" />
              <rect x="14" y="3" width="4" height="7" fill="#e02020" />
            </svg>
          </Frame>
        </div>
        <div className={cell}>
          <svg width="26" height="22" viewBox="0 0 26 22">
            <rect x="7" y="1" width="18" height="14" fill="#fff" stroke="#6c9fe8" strokeWidth="1.6" />
            <rect x="1" y="5" width="20" height="16" fill="#fff" stroke="#6c9fe8" strokeWidth="1.6" />
            <path d="M4 10h14M4 13h14M4 16h14" stroke="#666" strokeWidth="1.4" />
          </svg>
        </div>
        <div className={cell}><Frame>F10</Frame></div>
        <div className={cell}>
          <Frame>
            <svg width="20" height="17" viewBox="0 0 20 17">
              <path d="M5 6v8h6M5 9h6" stroke="#6c9fe8" fill="none" />
              <rect x="2" y="1" width="8" height="4" fill="#e8b820" />
              <rect x="11" y="6" width="7" height="4" fill="#e8b820" />
              <rect x="11" y="12" width="7" height="4" fill="#e8b820" />
            </svg>
          </Frame>
        </div>
        <div className={cell}><Frame><span className="text-[#ff6a20]">自</span></Frame></div>
        <div className={cell}><Frame>F12</Frame></div>
        <div className={cell}>
          <span className="w-[24px] h-[21px] rounded-[5px] bg-white border-2 border-[#309090] flex items-center justify-center text-[#1c50c8] text-[12px] italic font-bold">f(x)</span>
        </div>
        <div className={cell}>
          <Frame>
            <svg width="16" height="14" viewBox="0 0 16 14"><circle cx="8" cy="7" r="5" fill="none" stroke="#2a80c8" strokeWidth="2" /></svg>
          </Frame>
        </div>
        <div className="h-[2px] bg-[#b8b8b8] ml-[2px] shrink-0 mt-[8px] mb-[4px]" />
        <div className={cell}>
          <Frame>
            <svg width="20" height="15" viewBox="0 0 20 15">
              <path d="M1 5l3-2 3 2 3-2 3 2 3-2 3 2" stroke="#e02020" fill="none" strokeWidth="1.4" />
              <path d="M1 11l3-2 3 2 3-2 3 2 3-2 3 2" stroke="#2020e0" fill="none" strokeWidth="1.4" />
            </svg>
          </Frame>
        </div>
        <div className={cell}><span className="text-[14px] font-bold text-[#4050c0]">RSI</span></div>
        <div className={cell}>
          <svg width="20" height="26" viewBox="0 0 20 26">
            <path d="M10 1l6 6H4z" fill="#e03030" />
            <text x="10" y="24" textAnchor="middle" fontSize="20" fontWeight="700" fill="#d03030">S</text>
          </svg>
        </div>
        <div className={cell}>
          <svg width="26" height="26" viewBox="0 0 26 26" fill="#1c50d0">
            <path d="M13 1l5 6H8zM13 25l-5-6h10zM1 13l6-5v10zM25 13l-6 5V8z" />
            <rect x="9" y="9" width="8" height="8" />
          </svg>
        </div>
        <div className={cell}>
          <svg width="24" height="24" viewBox="0 0 24 24">
            <path d="M2 22l2-7L17 3l5 4L9 20z" fill="#f0b030" stroke="#a07020" />
            <path d="M17 3l5 4-2 2-5-4z" fill="#e88080" />
            <path d="M2 22l2-6 4 4z" fill="#505050" />
          </svg>
        </div>
        <div className="h-[2px] bg-[#b8b8b8] ml-[2px] shrink-0 mt-[4px] mb-[6px]" />
        <div className={cell}><Frame wide>Fs</Frame></div>
        <div className={cell}>
          <Frame wide>
            <svg width="20" height="15" viewBox="0 0 20 15" fill="none" stroke="#40b060" strokeWidth="2.4">
              <path d="M3 7a7 5 0 0 1 13-2" />
              <path d="M17 8a7 5 0 0 1-13 2" />
            </svg>
          </Frame>
        </div>
        {['1', '5', '15', '30', '60'].map((n) => (
          <div key={n} className={`${cell} text-[17px]`}>{n}</div>
        ))}
        <div className={`${cell} text-[19px] bg-[#f8f8f8] border-t-2 border-l-2 border-[#c0c0c0] -mr-[2px]`}>日</div>
        {['周', '月', 'N', '多', '季', '年'].map((n) => (
          <div key={n} className={`${cell} text-[19px]`}>{n}</div>
        ))}
      </div>
    </div>
  );
}

function StatusBar() {
  const item = 'text-[23px] font-bold tracking-[-1.2px] whitespace-nowrap';
  return (
    <div className="h-[37px] shrink-0 bg-[#f0f0f0] flex items-center whitespace-nowrap">
      <span className="ml-[1px] w-[21px] h-[24px] rounded-[3px] bg-[#f0b030] border border-[#c07a10] flex items-center justify-center">
        <span className="w-[11px] h-[14px] border border-[#fff4c0] bg-[#f8d060]" />
      </span>
      <span className="ml-[2px] text-[24px] text-[#101010] w-[53px]">上证</span>
      <span className={`${item} text-[#008000] w-[95px]`}>3363.78</span>
      <span className={`${item} text-[#008000] w-[81px]`}>-30.47</span>
      <span className={`${item} text-[#008000] w-[87px]`}>-0.90%</span>
      <span className={`${item} text-[#101010] w-[95px]`}>3408<span className="font-normal text-[26px]">亿</span></span>
      <span className="text-[24px] text-[#101010] w-[54px]">沪深</span>
      <span className={`${item} text-[#008000] w-[93px]`}>4568.37</span>
      <span className={`${item} text-[#008000] w-[81px]`}>-51.51</span>
      <span className={`${item} text-[#008000] w-[86px]`}>-1.11%</span>
      <span className={`${item} text-[#101010] w-[98px]`}>2540<span className="font-normal text-[26px]">亿</span></span>
      <span className="text-[24px] text-[#303030] w-[54px]">创业</span>
      <span className={`${item} text-[#ff0000] w-[109px]`}>2914.16</span>
      <span className={`${item} text-[#ff0000] w-[66px]`}>7.40</span>
      <span className={`${item} text-[#ff0000] w-[80px]`}>0.25%</span>
      <span className={`${item} text-[#202020] w-[90px]`}>1745亿</span>
      <span className="text-[20px] text-[#202020] w-[170px]">总成交 7896亿</span>
      <span className="text-[20px] text-[#202020]">平安证券福利专享</span>
      <span className="ml-auto mr-[30px] text-[20px] text-[#606060]">www.tdx.com.cn</span>
    </div>
  );
}

function Watermark() {
  return (
    <div className="absolute left-[1080px] top-[1286px] w-[1079px] h-[109px] bg-[#7fabd9]/95 flex items-center overflow-hidden">
      <span className="ml-[24px] w-[392px] shrink-0 text-[75px] font-black leading-none text-[#1a0f8c] whitespace-nowrap">公式指标网</span>
      <svg width="110" height="109" viewBox="0 0 110 109" className="shrink-0 ml-[12px]">
        <path id="wmArc" d="M8 58 A47 47 0 0 0 50 104" fill="none" />
        <path d="M6 50 A49 49 0 0 1 44 7 L46 16 A40 40 0 0 0 15 50 Z" fill="#d9634a" />
        <path d="M104 50 A49 49 0 0 0 66 7 L64 16 A40 40 0 0 1 95 50 Z" fill="#d9634a" />
        <path d="M104 56 A49 49 0 0 1 60 105 L60 96 A40 40 0 0 0 95 56 Z" fill="#e8c848" />
        <path d="M6 56 A49 49 0 0 0 50 105 L50 96 A40 40 0 0 1 15 56 Z" fill="#e8c848" />
        <path d="M47 3h16l-2 14h9v22h-8v8h10v17h-12v8h12v12H63l-2 21H49l-2-21H36V72h12v-8H36V47h10v-8h-8V17h11z" fill="#e8c848" />
        <rect x="50" y="25" width="10" height="12" fill="#7fabd9" />
        <rect x="51" y="52" width="8" height="6" fill="#7fabd9" />
        <rect x="52" y="80" width="6" height="12" fill="#7fabd9" />
        <text fill="#f4f4f4" fontSize="8.5">
          <textPath href="#wmArc">www.9m8.cn</textPath>
        </text>
      </svg>
      <span className="ml-[38px] text-[70px] font-bold leading-none text-white whitespace-nowrap [font-family:'DejaVu_Serif',serif]">www.9m8.cn</span>
    </div>
  );
}

export default function App() {
  return (
    <div className="relative w-[2159px] h-[1395px] overflow-hidden bg-black flex flex-col [font-family:'Liberation_Sans','Noto_Sans_CJK_SC',sans-serif]">
      <TitleBar />
      <div className="flex flex-1 min-h-0">
        <div className="w-[1787px] shrink-0 flex flex-col">
          <PeriodBar />
          <Pane h="h-[555px] border-b-2 border-[#a00000]">
            <MainChart />
            <Legend />
            <svg viewBox="0 67 1787 553" className="absolute inset-0 w-full h-full pointer-events-none">
              <Tag x={0} w={14} bg="#008000" t="威" />
              <Tag x={842} w={19} bg="#004080" t="财" />
              <Tag x={1537} w={19} bg="#900000" t="涨" />
              <Tag x={1601} w={14} bg="#a05010" t="移" />
              <Tag x={1615} w={13} bg="#009000" t="跌" />
              <Tag x={1628} w={19} bg="#c85a18" t="预" />
            </svg>
          </Pane>
          <Pane h="h-[408px] border-b-2 border-[#a00000]">
            <FundChart />
            <div className="relative h-[24px] flex items-center text-[18px] whitespace-nowrap pl-[2px]">
              <Dropdown />
              <span className="text-[#c0c0c0] ml-[7px] w-[94px]">游资一致</span>
              <span className="text-[#e0006a] w-[109px]">主力: 270.05</span>
              <span className="text-[#f0f000] w-[104px]">游资: 166.21</span>
              <CyanArrow />
              <span className="text-[#e00000] ml-[10px]">一致: 0.00</span>
            </div>
          </Pane>
          <Pane h="h-[252px]">
            <StickChart />
            <div className="relative h-[24px] flex items-center text-[18px] whitespace-nowrap pl-[2px]">
              <Dropdown />
              <span className="text-[#c0c0c0] ml-[7px] w-[81px]">粘合必涨</span>
              <span className="text-[#f0f000] w-[76px]">AD: 0.00</span>
              <span className="text-[#e02020] w-[140px]">AZ: -3292869.50</span>
              <RedUpArrow />
              <span className="text-[#a0a0a0] ml-[2px]">: 0.00</span>
            </div>
          </Pane>
          <DateAxis />
          <TabBars />
        </div>
        <QuotePanel />
        <SideBar />
      </div>
      <StatusBar />
      <Watermark />
    </div>
  );
}
